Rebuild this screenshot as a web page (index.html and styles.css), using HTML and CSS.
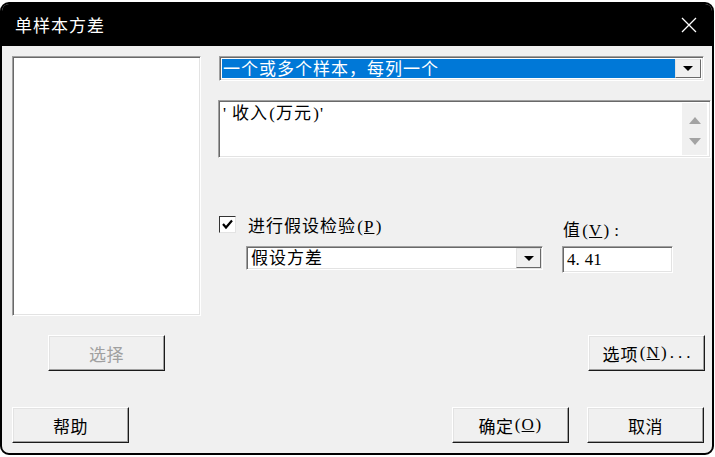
FILE: index.html
```html
<!DOCTYPE html>
<html lang="zh-CN">
<head>
<meta charset="utf-8">
<title>单样本方差</title>
<link rel="stylesheet" href="styles.css">
</head>
<body>
<div class="window">
  <div class="titlebar">
    <span class="title">单样本方差</span>
    <svg class="close" width="16" height="16" viewBox="0 0 16 16"><path d="M1 1 L15 15 M15 1 L1 15" stroke="#fff" stroke-width="1.3" fill="none"/></svg>
  </div>
  <div class="content">
    <div class="main">
      <div class="leftcol">
        <div class="listbox sunken"></div>
        <div class="btn btn-select disabled">选择</div>
      </div>
      <div class="rightcol">
        <div class="combo combo1 sunken">
          <div class="combo-field selected">一个或多个样本，每列一个</div>
          <div class="combo-arrow"><span class="tri"></span></div>
        </div>
        <div class="textarea sunken">
          <div class="ta-text"><span class="q">'</span>收入<span class="p">(</span>万元<span class="p">)</span><span class="q">'</span></div>
          <div class="ta-scroll">
            <span class="tri-up"></span>
            <span class="tri-down"></span>
          </div>
        </div>
        <div class="hyp">
          <div class="hyp-left">
            <div class="check-row">
              <span class="checkbox sunken">
                <svg width="13" height="13" viewBox="0 0 13 13"><path d="M2 6 L5 9.5 L11 2.5" stroke="#000" stroke-width="2.2" fill="none"/></svg>
              </span>
              <span class="label">进行假设检验<span class="p">(</span><u>P</u><span class="p">)</span></span>
            </div>
            <div class="combo combo2 sunken">
              <div class="combo-field">假设方差</div>
              <div class="combo-arrow"><span class="tri"></span></div>
            </div>
          </div>
          <div class="hyp-right">
            <div class="label value-label">值<span class="p">(</span><u>V</u><span class="p">)</span><span class="colon">:</span></div>
            <div class="input sunken">4.<span class="sp"></span>41</div>
          </div>
        </div>
        <div class="btn btn-options">选项<span class="p">(</span><u>N</u><span class="p">)</span><span class="dots">...</span></div>
      </div>
    </div>
    <div class="bottom">
      <div class="btn">帮助</div>
      <div class="btn btn-ok">确定<span class="p">(</span><u>O</u><span class="p">)</span></div>
      <div class="btn btn-cancel">取消</div>
    </div>
  </div>
</div>
</body>
</html>
```
FILE: styles.css
```css
* { box-sizing: border-box; }
html, body { margin: 0; padding: 0; }
body {
  width: 715px;
  height: 457px;
  background: #ffffff;
  overflow: hidden;
  font-family: "Liberation Serif", "Noto Sans CJK SC", serif;
  font-size: 17px;
  color: #000;
}
.window {
  margin: 2px 1px 0 0;
  height: 453px;
  border: 2px solid #000;
  border-radius: 9px;
  background: #f0f0f0;
  display: flex;
  flex-direction: column;
  overflow: hidden;
}
.titlebar {
  height: 42px;
  background: #000;
  display: flex;
  align-items: center;
  justify-content: space-between;
  padding: 0 15px 0 13px;
  flex: none;
}
.title {
  color: #fff;
  font-family: "Noto Sans CJK SC", sans-serif;
  font-size: 17px;
  letter-spacing: 1px;
  margin-top: -1px;
}
.close { display: block; margin-top: -1px; }
.content {
  flex: 1;
  padding: 10px 0 0 10px;
  display: flex;
  flex-direction: column;
}
.main { display: flex; gap: 17px; }
.leftcol { width: 189px; display: flex; flex-direction: column; flex: none; }
.sunken {
  border-top: 1px solid #a0a0a0;
  border-left: 1px solid #a0a0a0;
  border-bottom: 1px solid #ffffff;
  border-right: 1px solid #ffffff;
  box-shadow: inset 1px 1px #696969, inset -1px -1px #e3e3e3;
  background: #fff;
}
.listbox { height: 260px; }
.btn {
  width: 117px;
  height: 36px;
  display: flex;
  align-items: center;
  justify-content: center;
  background: #f0f0f0;
  border-top: 1px solid #ffffff;
  border-left: 1px solid #ffffff;
  border-right: 1px solid #1a1a1a;
  border-bottom: 1px solid #1a1a1a;
  box-shadow: inset -1px -1px #a0a0a0, inset 1px 1px #e3e3e3;
  letter-spacing: 0.5px;
  flex: none;
  white-space: nowrap;
}
.btn.disabled { color: #a0a0a0; }
.btn-select { margin: 19px 0 0 36px; }
.rightcol { flex: 1; display: flex; flex-direction: column; }
.combo { display: flex; height: 25px; padding: 2px; }
.combo1 { width: 485px; margin-left: 1px; }
.combo-field {
  flex: 1;
  padding-left: 1px;
  line-height: 21px;
  white-space: nowrap;
  overflow: hidden;
  letter-spacing: 1px;
}
.combo-field.selected { background: #0078d7; color: #fff; }
.combo-arrow {
  width: 26px;
  display: flex;
  align-items: center;
  justify-content: center;
  background: #f0f0f0;
  border-top: 1px solid #e3e3e3;
  border-left: 1px solid #e3e3e3;
  border-right: 1px solid #696969;
  border-bottom: 1px solid #696969;
}
.tri {
  width: 0; height: 0;
  border-left: 5px solid transparent;
  border-right: 5px solid transparent;
  border-top: 5px solid #000;
}
.textarea {
  height: 58px;
  margin-top: 19px;
  width: 493px;
  display: flex;
  padding: 2px;
}
.ta-text { flex: 1; padding: 1px 0 0 2px; letter-spacing: 1px; line-height: 19px; }
.q { display: inline-block; width: 9px; }
.p { display: inline-block; width: 8px; text-align: center; letter-spacing: 0; }
.ta-scroll {
  width: 25px;
  background: #f0f0f0;
  display: flex;
  flex-direction: column;
  align-items: center;
  justify-content: space-between;
  padding: 14px 0 10px;
  margin-right: 1px;
}
.tri-up {
  width: 0; height: 0;
  border-left: 6px solid transparent;
  border-right: 6px solid transparent;
  border-bottom: 7px solid #a3a3a3;
}
.tri-down {
  width: 0; height: 0;
  border-left: 6px solid transparent;
  border-right: 6px solid transparent;
  border-top: 7px solid #a3a3a3;
}
.hyp { display: flex; gap: 19px; margin-top: 58px; }
.hyp-left { width: 325px; display: flex; flex-direction: column; }
.check-row { display: flex; align-items: center; height: 20px; margin-top: -2px; }
.checkbox {
  width: 17px; height: 17px;
  margin-left: 1px;
  display: flex; align-items: center; justify-content: center;
  border-color: #333 #e3e3e3 #e3e3e3 #333;
  box-shadow: none;
  border-width: 1px;
}
.label { letter-spacing: 1px; margin-left: 12px; white-space: nowrap; }
.combo2 { width: 297px; margin-left: 28px; margin-top: 12px; height: 24px; padding: 1px; }
.combo2 .combo-field { padding-left: 3px; line-height: 21px; }
.combo2 .combo-arrow { width: 25px; }
.hyp-right { width: 111px; display: flex; flex-direction: column; }
.value-label { margin-left: 1px; line-height: 20px; margin-top: 5px; }
.colon { margin-left: 4px; }
.input { height: 27px; margin-top: 5px; padding: 2px 0 0 4px; line-height: 21px; }
.sp { display: inline-block; width: 5px; }
.btn-options { margin-top: 62px; align-self: flex-end; margin-right: 7px; letter-spacing: 1px; }
.dots { letter-spacing: 4px; margin-left: 2px; margin-right: -4px; }
.bottom { display: flex; margin-top: 36px; padding-right: 8px; }
.btn-ok { margin-left: auto; }
.btn-cancel { margin-left: 18px; }
```
